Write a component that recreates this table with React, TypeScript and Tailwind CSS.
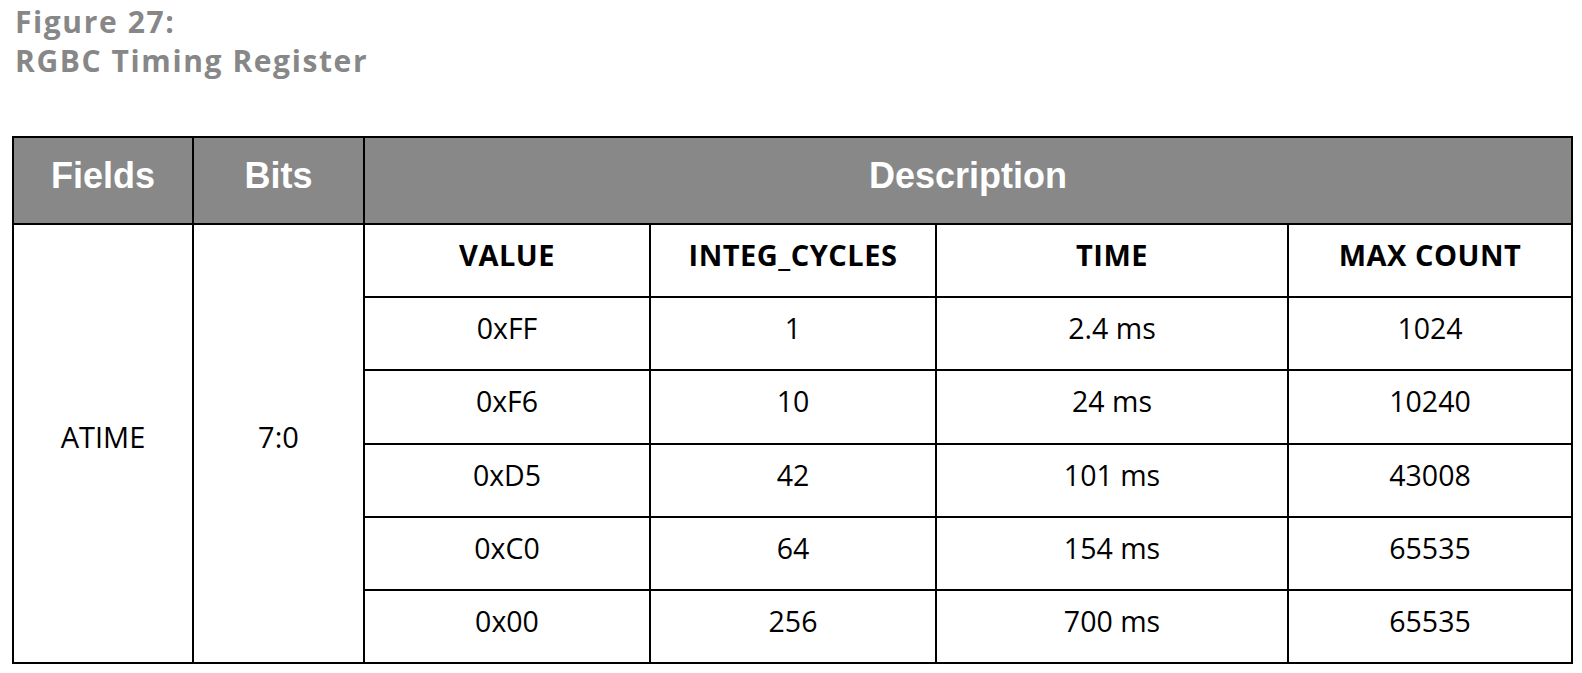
import React from "react";

const rows = [
  { value: "0xFF", cycles: "1", time: "2.4 ms", max: "1024" },
  { value: "0xF6", cycles: "10", time: "24 ms", max: "10240" },
  { value: "0xD5", cycles: "42", time: "101 ms", max: "43008" },
  { value: "0xC0", cycles: "64", time: "154 ms", max: "65535" },
  { value: "0x00", cycles: "256", time: "700 ms", max: "65535" },
];

const head = "bg-[#888888] text-white font-bold text-[36px] flex items-center justify-center pb-[9px] [font-family:'Liberation_Sans',Arial,sans-serif]";
const sub = "bg-white text-black font-bold text-[29px] tracking-[0.5px] flex items-center justify-center pb-[12px]";
const cell = "bg-white text-black text-[28.5px] flex items-center justify-center pb-[11px]";

export default function App() {
  return (
    <div className="min-h-screen bg-white pl-[12px] pt-[2px] [font-family:'Open_Sans',sans-serif]">
      <div className="pl-[3px] text-[30px] font-bold leading-[39px] text-[#878787] tracking-[1.6px]">
        <div>Figure 27:</div>
        <div>RGBC Timing Register</div>
      </div>

      <div className="mt-[56px] grid w-[1561px] grid-cols-[178px_169px_284px_284px_350px_282px] grid-rows-[85px_71px_71px_72px_71px_71px_71px] gap-[2px] bg-black p-[2px]">
        <div className={head}>Fields</div>
        <div className={head}>Bits</div>
        <div className={`${head} col-span-4`}>Description</div>

        <div className="row-span-6 flex items-center justify-center bg-white pb-[14px] text-[29px] text-black">ATIME</div>
        <div className="row-span-6 flex items-center justify-center bg-white pb-[14px] text-[29px] text-black">7:0</div>

        <div className={sub}>VALUE</div>
        <div className={sub}>INTEG_CYCLES</div>
        <div className={sub}>TIME</div>
        <div className={sub}>MAX COUNT</div>

        {rows.map((r) => (
          <React.Fragment key={r.value}>
            <div className={cell}>{r.value}</div>
            <div className={cell}>{r.cycles}</div>
            <div className={cell}>{r.time}</div>
            <div className={cell}>{r.max}</div>
          </React.Fragment>
        ))}
      </div>
    </div>
  );
}
